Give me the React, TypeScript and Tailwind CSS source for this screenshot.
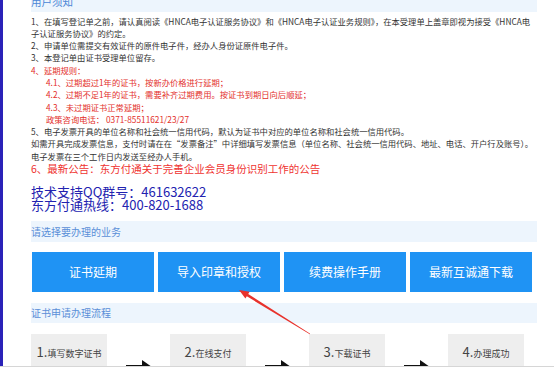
import React from "react";

const Arrow = () => (
  <svg width="26" height="14" viewBox="0 0 26 14" className="block">
    <rect x="0" y="5" width="18" height="4" fill="#111" />
    <polygon points="16,0 26,7 16,14" fill="#111" />
  </svg>
);

export default function App() {
  const steps = [
    { n: "1.", t: "填写数字证书", t2: "申请信息" },
    { n: "2.", t: "在线支付" },
    { n: "3.", t: "下载证书" },
    { n: "4.", t: "办理成功" },
  ];
  const buttons = ["证书延期", "导入印章和授权", "续费操作手册", "最新互诚通下载"];
  return (
    <div className="relative w-[554px] h-[372px] overflow-hidden bg-white flex font-['Noto_Sans_CJK_SC','Noto_Sans',sans-serif]">
      <div className="w-[3px] shrink-0 bg-[#2a22b8]" />
      <div className="ml-[28px] w-[506px] shrink-0">
        <div className="-mt-[8px] h-[20px] bg-[#edf5fd] flex items-center">
          <span className="text-[10.5px] leading-none text-[#4a86d6]">用户须知</span>
        </div>

        <div className="mt-[2.5px] text-[8.3px] leading-[12.3px] text-[#333] whitespace-nowrap">
          <p>1、在填写登记单之前，请认真阅读《HNCA电子认证服务协议》和《HNCA电子认证业务规则》，在本受理单上盖章即视为接受《HNCA电</p>
          <p>子认证服务协议》的约定。</p>
          <p>2、申请单位需提交有效证件的原件电子件，经办人身份证原件电子件。</p>
          <p>3、本登记单由证书受理单位留存。</p>
          <p className="text-[#e3302c]">4、延期规则：</p>
          <p className="pl-[15px] text-[#e3302c]">4.1、过期超过1年的证书，按新办价格进行延期；</p>
          <p className="pl-[15px] text-[#e3302c]">4.2、过期不足1年的证书，需要补齐过期费用。按证书到期日向后顺延；</p>
          <p className="pl-[15px] text-[#e3302c]">4.3、未过期证书正常延期；</p>
          <p className="pl-[15px] text-[#e3302c]">政策咨询电话： 0371-85511621/23/27</p>
          <p>5、电子发票开具的单位名称和社会统一信用代码，默认为证书中对应的单位名称和社会统一信用代码。</p>
          <p>如需开具完成发票信息，支付时请在在“发票备注”中详细填写发票信息（单位名称、社会统一信用代码、地址、电话、开户行及账号）。</p>
          <p>电子发票在三个工作日内发送至经办人手机。</p>
        </div>
        <p className="text-[10.5px] leading-[14px] text-[#ef3330] whitespace-nowrap">
          6、最新公告：东方付通关于完善企业会员身份识别工作的公告
        </p>

        <div className="mt-[10px] text-[13px] leading-[12.5px] text-[#2222b0] whitespace-nowrap">
          <p>技术支持QQ群号：461632622</p>
          <p>东方付通热线：400-820-1688</p>
        </div>

        <div className="mt-[10px] h-[21px] bg-[#edf5fd] flex items-center">
          <span className="text-[10px] leading-none text-[#5a8fd8]">请选择要办理的业务</span>
        </div>

        <div className="mt-[10px] ml-[1px] w-[500px] grid grid-cols-4 gap-[4px]">
          {buttons.map((b) => (
            <div
              key={b}
              className="h-[40px] bg-[#1f93f4] flex items-center justify-center text-white text-[12px] leading-none"
            >
              {b}
            </div>
          ))}
        </div>

        <div className="mt-[11px] h-[20px] bg-[#edf5fd] flex items-center">
          <span className="text-[10px] leading-none text-[#5a8fd8]">证书申请办理流程</span>
        </div>

        <div className="mt-[11px] flex items-start">
          {steps.map((s, i) => (
            <React.Fragment key={s.n}>
              <div className="w-[76px] h-[50px] shrink-0 bg-[#eeeeee] pt-[8px] text-center text-[#444] leading-[16px] whitespace-nowrap">
                <span className="text-[13px]">{s.n}</span>
                <span className="text-[9px]">{s.t}</span>
                {s.t2 && (
                  <>
                    <br />
                    <span className="text-[9px]">{s.t2}</span>
                  </>
                )}
              </div>
              {i < steps.length - 1 && (
                <div className="w-[63px] shrink-0 flex justify-center pt-[26px]">
                  <Arrow />
                </div>
              )}
            </React.Fragment>
          ))}
        </div>
      </div>

      <svg className="absolute left-0 top-0 pointer-events-none" width="554" height="372" viewBox="0 0 554 372">
        <polygon
          points="310.2,333.7 248.2,294.1 249.6,291.8 239,290 245.4,298.6 246.8,296.3 309.8,334.3"
          fill="#e8322c"
        />
      </svg>

      <div className="absolute left-0 bottom-0 w-full h-[6px] bg-white border-t border-[#d6d6d6]" />
    </div>
  );
}
